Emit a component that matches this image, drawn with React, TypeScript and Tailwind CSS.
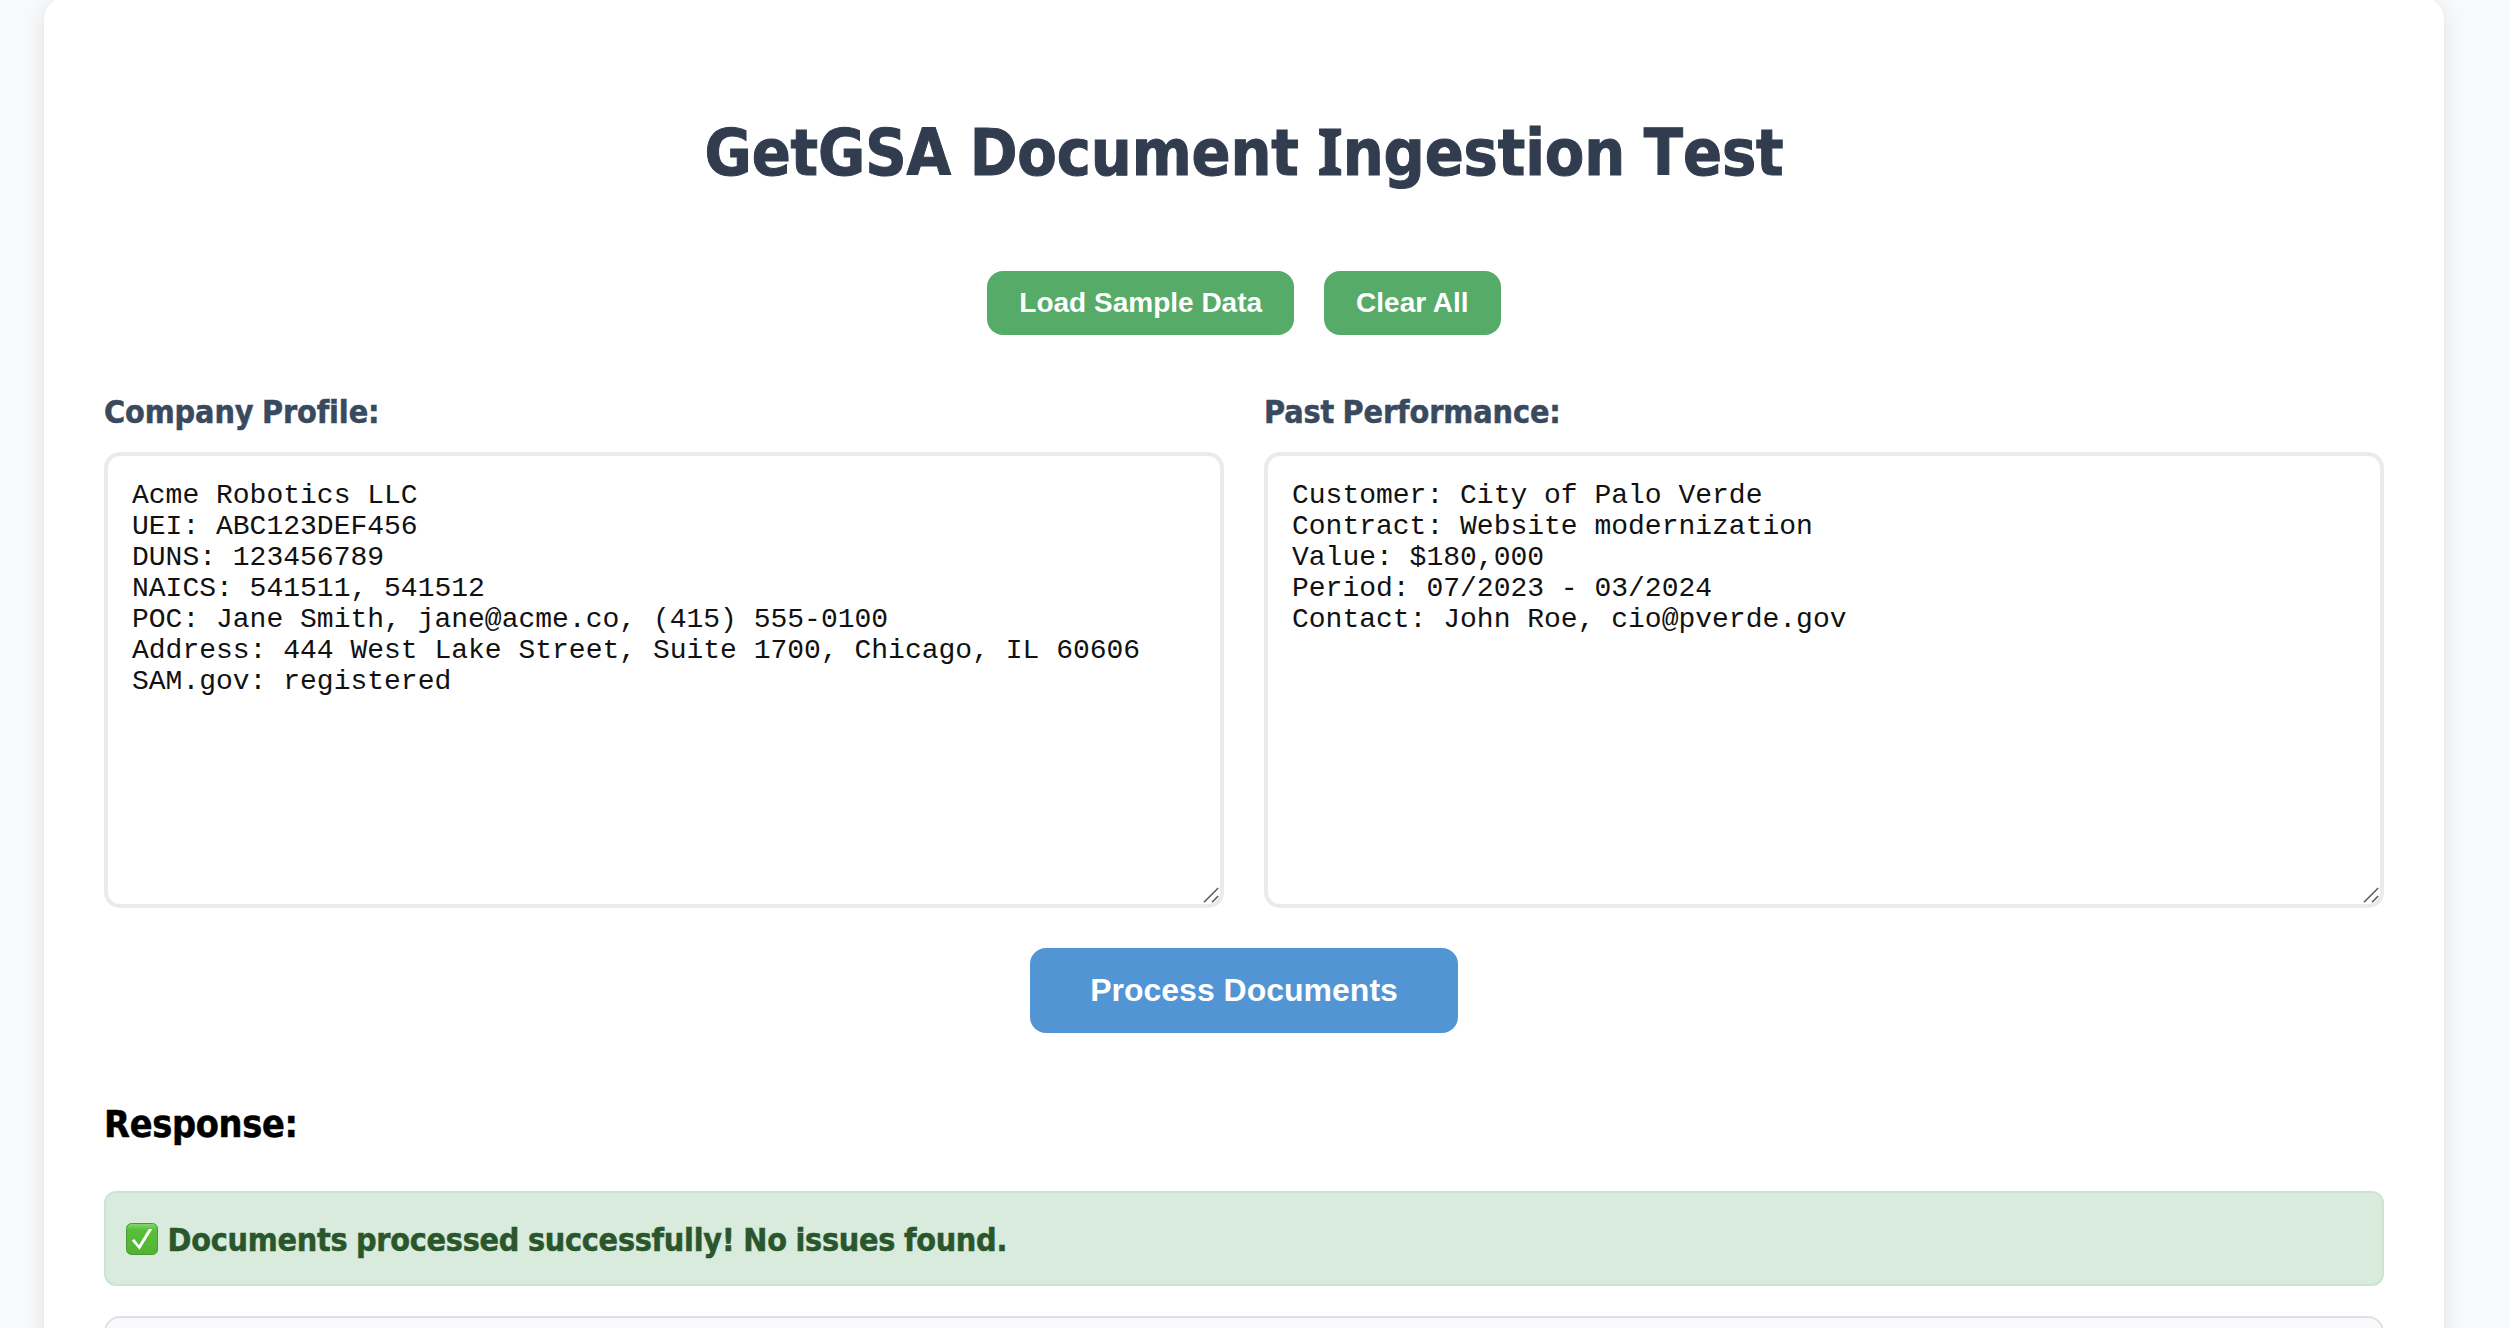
import React from "react";

const companyProfile = `Acme Robotics LLC
UEI: ABC123DEF456
DUNS: 123456789
NAICS: 541511, 541512
POC: Jane Smith, jane@acme.co, (415) 555-0100
Address: 444 West Lake Street, Suite 1700, Chicago, IL 60606
SAM.gov: registered`;

const pastPerformance = `Customer: City of Palo Verde
Contract: Website modernization
Value: $180,000
Period: 07/2023 - 03/2024
Contact: John Roe, cio@pverde.gov`;

function CheckIcon() {
  return (
    <svg viewBox="0 0 32 32" className="mt-[3px] size-8 shrink-0" aria-hidden="true">
      <defs>
        <linearGradient id="tile" x1="0" y1="0" x2="0" y2="1">
          <stop offset="0" stopColor="#8bd672" />
          <stop offset="0.2" stopColor="#58c03b" />
          <stop offset="1" stopColor="#52b233" />
        </linearGradient>
      </defs>
      <rect x="0.5" y="0.5" width="31" height="31" rx="5" fill="url(#tile)" stroke="#479a35" />
      <path d="M5.7 17.6 L8.3 15.9 L12.9 22.3 L22.8 6 L26.3 6 L13.5 26.8 Z" fill="#fff" />
    </svg>
  );
}

function Field({ label, value }: { label: string; value: string }) {
  return (
    <div className="flex flex-col">
      <label className="mb-5 text-[32px] leading-10 font-bold tracking-[-0.1px] text-[#3a4a5e] [-webkit-text-stroke:0.5px] [word-spacing:-1.5px]">
        {label}
      </label>
      <div className="relative h-[456px]">
        <textarea
          aria-label={label}
          defaultValue={value}
          spellCheck={false}
          className="block size-full resize-none overflow-hidden rounded-2xl border-4 border-[#e9eaee] bg-white p-6 font-['Liberation_Mono',monospace] text-[28px] leading-[31px] text-[#111] outline-none"
        />
        <svg viewBox="0 0 16 16" className="absolute right-[5px] bottom-[5px] size-4" fill="none" stroke="#5c5c5c" strokeWidth="1.6" aria-hidden="true">
          <path d="M1 15.2 L15.2 1 M9 15.2 L15.2 9" />
        </svg>
      </div>
    </div>
  );
}

function SmallButton({ children }: { children: React.ReactNode }) {
  return (
    <button className="h-16 rounded-2xl bg-[#56ab68] px-8 font-['Liberation_Sans',sans-serif] text-[28px] leading-8 font-bold text-white">
      {children}
    </button>
  );
}

export default function App() {
  return (
    <div className="h-[1328px] overflow-hidden bg-[#f8f9fb] px-11 font-['DejaVu_Sans_Condensed','DejaVu_Sans',sans-serif]">
      <main className="-mt-1 mr-[22px] flex h-[1600px] flex-col rounded-3xl bg-white px-15 pt-[117px] shadow-[0_4px_20px_rgba(0,0,0,0.1)]">
        <h1 className="text-center text-[64px] leading-20 font-bold tracking-[-0.12px] whitespace-nowrap text-[#313d4f] [-webkit-text-stroke:1px] [font-kerning:none] [word-spacing:-1.2px]">
          GetGSA Document <span className="font-['Noto_Sans',sans-serif] text-[65px] leading-none">I</span>ngestion Test
        </h1>

        <div className="mt-[78px] flex justify-center gap-[30px]">
          <SmallButton>Load Sample Data</SmallButton>
          <SmallButton>Clear All</SmallButton>
        </div>

        <div className="mt-[57px] grid grid-cols-2 gap-10">
          <Field label="Company Profile:" value={companyProfile} />
          <Field label="Past Performance:" value={pastPerformance} />
        </div>

        <button className="mt-10 h-[85px] shrink-0 self-center rounded-2xl bg-[#5295d5] px-15 pb-0.5 font-['Liberation_Sans',sans-serif] text-[32px] leading-9 font-bold text-white">
          Process Documents
        </button>

        <h3 className="mt-[67px] text-[37.44px] leading-12 font-bold tracking-[-0.3px] text-black [-webkit-text-stroke:0.5px]">Response:</h3>

        <div className="mt-[43px] flex h-[95px] shrink-0 items-start rounded-xl border-2 border-[#c9e5cf] bg-[#d9ebdd] px-5 pt-[27px] text-[32px] leading-10 font-bold tracking-[-0.27px] text-[#2a562b] [-webkit-text-stroke:0.5px] [word-spacing:-1px]">
          <CheckIcon />
          <span className="ml-[9.5px]">Documents processed successfully! No issues found.</span>
        </div>

        <div className="mt-[30px] h-40 shrink-0 rounded-2xl border-2 border-[#dee0e4] bg-[#f8f9fb]" />
      </main>
    </div>
  );
}
